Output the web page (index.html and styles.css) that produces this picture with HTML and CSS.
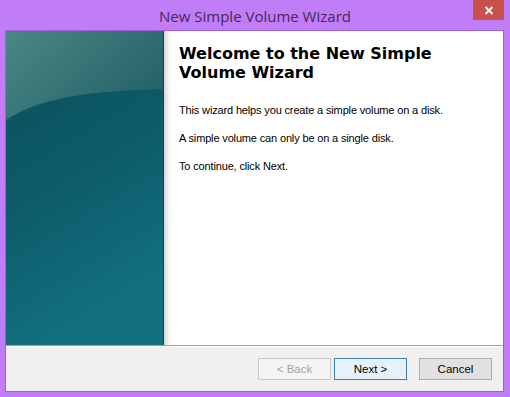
FILE: index.html
```html
<!DOCTYPE html>
<html lang="en">

<head>
    <meta charset="UTF-8" />
    <meta name="viewport" content="width=device-width, initial-scale=1.0" />
    <title>New Simple Volume Wizard</title>
    <link rel="stylesheet" href="styles.css">
</head>

<body>
    <div class="window">
        <div class="titlebar">
            <span></span>
            <span class="title">New Simple Volume Wizard</span>
            <button type="button" class="closeButton" aria-label="Close">
                <svg width="10" height="9" viewBox="0 0 10 9">
                    <path d="M1.5 1 L8.5 8 M8.5 1 L1.5 8" stroke="#ffffff" stroke-width="1.8" fill="none" />
                </svg>
            </button>
        </div>

        <div class="frame">
            <div class="main">
                <div class="banner">
                    <svg width="158" height="314" viewBox="0 0 158 314">
                        <defs>
                            <linearGradient id="deep" x1="0" y1="0" x2="0.3" y2="1">
                                <stop offset="0" stop-color="#0a4f5a" />
                                <stop offset="0.5" stop-color="#0d5a68" />
                                <stop offset="1" stop-color="#12707f" />
                            </linearGradient>
                            <linearGradient id="light" x1="0" y1="0" x2="1" y2="0.6">
                                <stop offset="0" stop-color="#4b8784" />
                                <stop offset="1" stop-color="#25636a" />
                            </linearGradient>
                        </defs>
                        <rect width="158" height="314" fill="url(#deep)" />
                        <path d="M0 89 C30 70 70 60 158 58 L158 0 L0 0 Z" fill="url(#light)" />
                    </svg>
                </div>
                <div class="content">
                    <h1>Welcome to the New Simple Volume Wizard</h1>
                    <p>This wizard helps you create a simple volume on a disk.</p>
                    <p>A simple volume can only be on a single disk.</p>
                    <p>To continue, click Next.</p>
                </div>
            </div>

            <div class="footer">
                <button type="button" class="btn" disabled>&lt; Back</button>
                <button type="button" class="btn nextButton">Next &gt;</button>
                <button type="button" class="btn cancelButton">Cancel</button>
            </div>
        </div>
    </div>
</body>

</html>
```

FILE: styles.css
```css
:root {
    --frame: #c17cf8;
    --frame-line: #9d62d2;
    --face: #f0f0f0;
}

body {
    margin: 0;
    background: var(--frame);
    font-family: "Liberation Sans", Arial, sans-serif;
}

.window {
    width: 510px;
    height: 397px;
}

.titlebar {
    height: 30px;
    display: grid;
    grid-template-columns: 1fr auto 1fr;
}

.title {
    font-family: "Open Sans", "Noto Sans", sans-serif;
    font-size: 15px;
    color: #432a59;
    align-self: center;
    padding-top: 1px;
}

.closeButton {
    justify-self: end;
    width: 31px;
    height: 20px;
    margin-right: 6px;
    padding: 0;
    border: none;
    background: #c9514c;
    display: flex;
    align-items: center;
    justify-content: center;
}

.frame {
    margin-left: 5px;
    width: 497px;
    border: 1px solid var(--frame-line);
    background: var(--face);
}

.main {
    height: 314px;
    display: flex;
    border-bottom: 1px solid #a0a0a0;
}

.banner {
    width: 158px;
    height: 314px;
    border-right: 1px solid #0a4550;
    box-sizing: border-box;
    overflow: hidden;
}

.banner svg {
    display: block;
}

.content {
    flex: 1;
    background: linear-gradient(to right, #d6d6d6, #f6f6f6 5px, #ffffff 9px);
    padding: 13px 16px 0 15px;
}

h1 {
    font-family: "DejaVu Sans", Verdana, sans-serif;
    font-size: 16px;
    line-height: 19px;
    font-weight: bold;
    color: #000;
    margin: 0 0 22px;
}

p {
    font-size: 11px;
    line-height: 13px;
    letter-spacing: -0.15px;
    color: #000;
    margin: 0 0 15px;
}

.footer {
    height: 45px;
    display: flex;
    align-items: center;
    justify-content: flex-end;
    padding-right: 11px;
    box-sizing: border-box;
    border-top: 1px solid #ffffff;
}

.btn {
    width: 73px;
    height: 22px;
    margin-left: 3px;
    font-family: "Liberation Sans", Arial, sans-serif;
    font-size: 11.5px;
    color: #000;
    background: #e1e1e1;
    border: 1px solid #adadad;
    padding: 0;
}

.btn:disabled {
    color: #a3a3a3;
    background: #f4f4f4;
    border-color: #c9c9c9;
}

.nextButton {
    background: #e5f1fb;
    border-color: #3c7fb1;
}

.cancelButton {
    margin-left: 12px;
}
```
